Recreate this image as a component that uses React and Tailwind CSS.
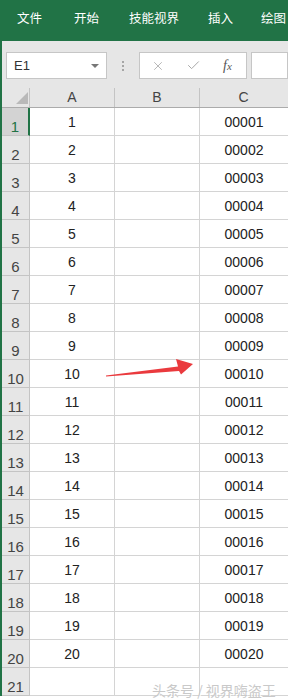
import { X, Check } from 'lucide-react';

const rows = Array.from({ length: 21 }, (_, i) => i + 1);

export default function App() {
  return (
    <div className="relative w-[288px] h-[700px] overflow-hidden bg-white font-['Liberation_Sans','Noto_Sans_CJK_SC',sans-serif]">
      {/* ribbon tabs */}
      <div className="h-[41px] bg-[#217346] flex items-start pt-[9px] pl-[17px] text-white text-[12.5px] leading-[18px] whitespace-nowrap overflow-hidden font-['Noto_Sans_CJK_SC',sans-serif]">
        <span>文件</span>
        <span className="ml-[32px]">开始</span>
        <span className="ml-[30px]">技能视界</span>
        <span className="ml-[29px]">插入</span>
        <span className="ml-[28px]">绘图</span>
      </div>

      <div className="border-l-2 border-[#217346]">
        {/* formula bar */}
        <div className="h-[47px] bg-[#e6e6e6] flex items-start pt-[11px] pl-[4px]">
          <div className="w-[101px] h-[27px] bg-white border border-[#c6c6c6] flex items-center justify-between pl-[7px] pr-[7px]">
            <span className="text-[13px] text-[#333]">E1</span>
            <span className="w-0 h-0 border-l-[4px] border-r-[4px] border-t-[4px] border-l-transparent border-r-transparent border-t-[#777]" />
          </div>
          <div className="w-[32px] h-[27px] flex flex-col items-center justify-center gap-[2px]">
            <span className="w-[2px] h-[2px] bg-[#a5a5a5]" />
            <span className="w-[2px] h-[2px] bg-[#a5a5a5]" />
            <span className="w-[2px] h-[2px] bg-[#a5a5a5]" />
          </div>
          <div className="w-[108px] h-[27px] bg-white border border-[#c6c6c6] flex items-center pl-[11px]">
            <X size={14} strokeWidth={1.4} className="text-[#a8a8a8]" />
            <Check size={15} strokeWidth={1.6} className="text-[#a8a8a8] ml-[21px]" />
            <span className="ml-[22px] text-[14px] italic text-[#555] font-['Liberation_Serif',serif]">
              f<span className="text-[11px]">x</span>
            </span>
          </div>
          <div className="ml-[4px] flex-1 h-[27px] bg-white border border-[#c6c6c6]" />
        </div>

        {/* column headers */}
        <div className="flex h-[20px] bg-[#e6e6e6] border-b border-[#ababab] text-[14px] text-[#444] leading-[19px]">
          <div className="relative w-[28px] border-r border-[#c4c4c4]">
            <svg width="12" height="12" viewBox="0 0 12 12" className="absolute left-[14px] top-[4px]">
              <polygon points="12,0 12,12 0,12" fill="#b9b9b9" />
            </svg>
          </div>
          <div className="w-[85px] border-r border-[#c4c4c4] text-center">A</div>
          <div className="w-[85px] border-r border-[#c4c4c4] text-center">B</div>
          <div className="flex-1 text-center pr-[1px]">C</div>
        </div>

        {/* rows */}
        {rows.map((r) => (
          <div key={r} className="flex h-[28px] text-[14px] leading-[18px]">
            <div
              className={
                r === 1
                  ? 'w-[28px] bg-[#d3d3d3] border-r-2 border-b border-r-[#217346] border-b-[#c4c4c4] text-[#217346] flex items-end justify-center text-[15px] leading-[16px]'
                  : 'w-[28px] bg-[#e6e6e6] border-r border-b border-[#c4c4c4] text-[#444] flex items-end justify-center text-[15px] leading-[16px]'
              }
            >
              {r}
            </div>
            <div className="w-[85px] border-r border-b border-[#d4d4d4] flex items-center justify-center text-[#222]">
              {r <= 20 ? r : ''}
            </div>
            <div className="w-[85px] border-r border-b border-[#d4d4d4]" />
            <div className="flex-1 border-b border-[#d4d4d4] flex items-center justify-center text-[#222]">
              {r <= 20 ? String(r).padStart(5, '0') : ''}
            </div>
          </div>
        ))}
      </div>

      {/* red arrow annotation */}
      <svg className="absolute left-0 top-0 pointer-events-none" width="288" height="700">
        <polygon
          points="106,375.5 178,366.5 176,359 193,364 181,374.5 179,371 106,376.5"
          fill="#ea3a3e"
        />
      </svg>

      {/* watermark */}
      <div className="absolute left-[152px] top-[680px] text-[14px] leading-[20px] text-[#c9c9c9] whitespace-nowrap font-['Noto_Sans_CJK_SC',sans-serif] [text-shadow:1px_1px_0_#ffffff]">
        头条号 / 视界嗨盗王
      </div>
    </div>
  );
}
